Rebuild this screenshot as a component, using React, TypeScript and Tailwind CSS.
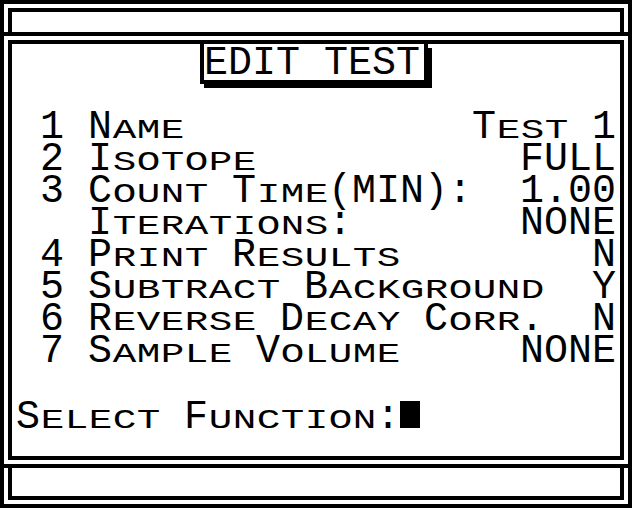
import React from "react";

const COLS = 25;

function line(left: string, right: string) {
  return left.padEnd(COLS - right.length) + right;
}

const menu = [
  line(" 1 Name", "Test 1"),
  line(" 2 Isotope", "FULL"),
  line(" 3 Count Time(MIN):", "1.00"),
  line("   Iterations:", "NONE"),
  line(" 4 Print Results", "N"),
  line(" 5 Subtract Background", "Y"),
  line(" 6 Reverse Decay Corr.", "N"),
  line(" 7 Sample Volume", "NONE"),
];

// one fixed 24px cell per character, lower case shown as small caps
function Cell({ ch }: { ch: string }) {
  const small = ch !== ch.toUpperCase();
  return (
    <span className="inline-block w-[24px] text-center leading-[32px]">
      {small ? (
        <span className="inline-block text-[28px] leading-[24px] scale-x-[1.4]">{ch.toUpperCase()}</span>
      ) : ch === " " ? (
        "\u00a0"
      ) : (
        ch
      )}
    </span>
  );
}

function Row({ text, children, className = "" }: { text: string; children?: React.ReactNode; className?: string }) {
  return (
    <div className={`flex h-[32px] items-baseline ${className}`}>
      {text.split("").map((ch, i) => (
        <Cell key={i} ch={ch} />
      ))}
      {children}
    </div>
  );
}

export default function App() {
  return (
    <div className="w-[640px] h-[512px] bg-white text-black text-[40px] font-['Liberation_Mono',monospace]">
      <div className="w-[632px] h-[508px] border-4 border-black flex flex-col">
        <div className="h-[32px] border-b-4 border-black px-[4px] pt-[4px]">
          <div className="h-full border-4 border-b-0 border-black" />
        </div>

        <div className="mt-[4px] mx-[4px] h-[420px] border-4 border-black flex flex-col">
          <div className="self-start ml-[188px] border-4 border-t-0 border-black pt-[4px] pr-[4px] shadow-[4px_4px_0_0_#000]">
            <Row text="EDIT TEST" />
          </div>

          <div className="mt-[28px] pl-[4px] flex flex-col">
            {menu.map((t, i) => (
              <Row key={i} text={t} />
            ))}
            <Row text="Select Function:" className="mt-[20px]">
              <span className="inline-block w-[24px]">
                <span className="inline-block w-[20px] h-[27px] bg-black" />
              </span>
            </Row>
          </div>
        </div>

        <div className="mt-[4px] h-[40px] border-t-4 border-black px-[4px] pb-[4px]">
          <div className="h-full border-4 border-t-0 border-black" />
        </div>
      </div>
    </div>
  );
}
